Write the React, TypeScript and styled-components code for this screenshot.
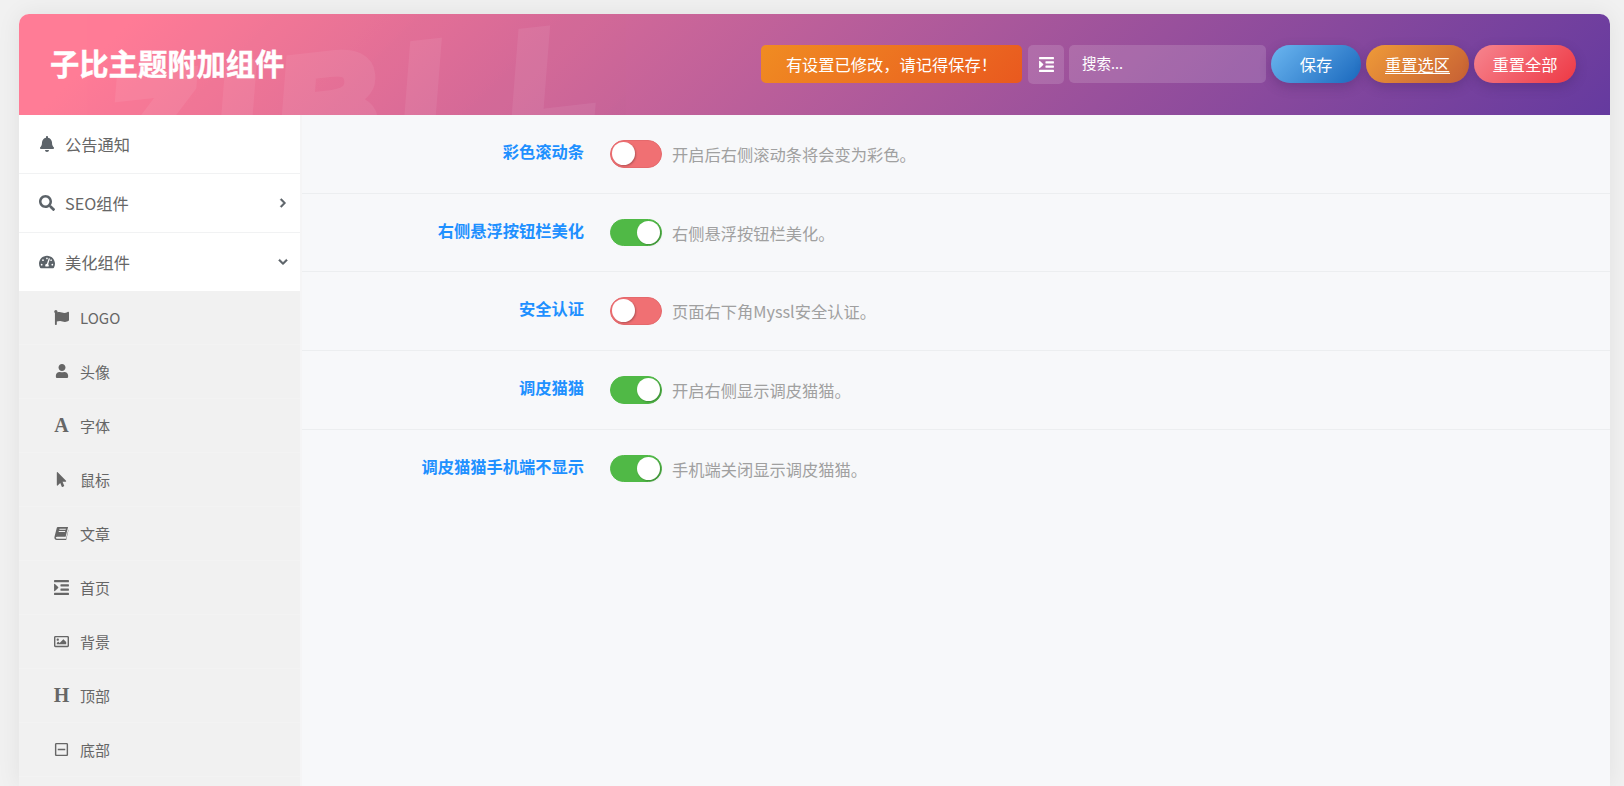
import React from 'react';
import styled, { createGlobalStyle } from 'styled-components';
import {
  FaBell, FaSearch, FaTachometerAlt, FaFlag, FaUser, FaMousePointer, FaIndent,
  FaRegImage, FaRegMinusSquare, FaChevronRight, FaChevronDown,
} from 'react-icons/fa';

const Global = createGlobalStyle`
  html, body { margin: 0; padding: 0; height: 786px; overflow: hidden; background: #f1f1f1; }
  body { font-family: "Noto Sans CJK SC", "Noto Sans", sans-serif; }
  * { box-sizing: border-box; }
`;

const Page = styled.div`
  height: 786px;
  padding: 14px 14px 0 19px;
  overflow: hidden;
`;

const Card = styled.div`
  height: 772px;
  display: flex;
  flex-direction: column;
  border-radius: 10px 10px 0 0;
  box-shadow: 0 0 25px rgba(0, 0, 0, 0.07);
  overflow: hidden;
  background: #f7f8fa;
`;

const Header = styled.header`
  position: relative;
  height: 101px;
  flex: none;
  display: flex;
  align-items: center;
  justify-content: space-between;
  padding: 0 34px 0 31px;
  background: linear-gradient(135deg, #ff7c96 7%, #653a9f 100%);
  overflow: hidden;
`;

const Watermark = styled.div`
  position: absolute;
  left: 96px;
  top: 45px;
  font-family: "Liberation Sans", sans-serif;
  font-size: 142px;
  line-height: 142px;
  font-weight: 700;
  font-style: italic;
  letter-spacing: 22px;
  color: #fff;
  opacity: 0.065;
  transform: rotate(-6.5deg);
  transform-origin: 0 100%;
  -webkit-text-stroke: 11px #fff;
`;

const Title = styled.h1`
  position: relative;
  margin: 0 0 5px;
  font-size: 29.3px;
  line-height: 40px;
  font-weight: 700;
  color: #fff;
  -webkit-text-stroke: 0.4px #fff;
`;

const Actions = styled.div`
  position: relative;
  display: flex;
  align-items: flex-start;
  gap: 5px;
`;

const Notice = styled.div`
  width: 261px;
  height: 38px;
  display: flex;
  align-items: center;
  justify-content: center;
  border-radius: 5px;
  margin-right: 1px;
  font-size: 16.25px;
  color: #fff;
  background: linear-gradient(135deg, #f08c22, #e9591f);
`;

const IconButton = styled.div`
  width: 36px;
  height: 39px;
  display: flex;
  align-items: center;
  justify-content: center;
  border-radius: 5px;
  color: #fff;
  font-size: 17px;
  background: rgba(255, 255, 255, 0.14);
`;

const Search = styled.div`
  width: 197px;
  height: 38px;
  display: flex;
  align-items: center;
  padding: 0 0 4px 13px;
  border-radius: 5px;
  font-size: 14.5px;
  color: #fff;
  background: rgba(255, 255, 255, 0.15);
`;

const Pill = styled.div<{ $from: string; $to: string; $w: number; $under?: boolean }>`
  width: ${(p) => p.$w}px;
  height: 38px;
  display: flex;
  align-items: center;
  justify-content: center;
  border-radius: 19px;
  font-size: 16.25px;
  color: #fff;
  text-decoration: ${(p) => (p.$under ? 'underline' : 'none')};
  text-underline-offset: 2px;
  background: linear-gradient(135deg, ${(p) => p.$from}, ${(p) => p.$to});
  box-shadow: 0 4px 12px rgba(60, 30, 90, 0.3);
`;

const Body = styled.div`
  flex: 1;
  display: flex;
  min-height: 0;
`;

const Sidebar = styled.nav`
  flex: none;
  width: 283px;
  background: #fff;
  border-right: 2px solid #f5f5f6;
`;

const MenuRow = styled.div`
  height: 59px;
  display: flex;
  align-items: center;
  padding: 0 12px 0 20px;
  border-bottom: 1px solid #f1f2f3;
  color: #666;
  font-size: 16.25px;
  background: #fff;
  &:nth-child(3) { height: 58px; border-bottom: none; }
`;

const MenuIcon = styled.span`
  width: 16px;
  margin-right: 10px;
  display: flex;
  justify-content: center;
  font-size: 16px;
  color: #5c6369;
`;

const Arrow = styled.span`
  margin-left: auto;
  display: flex;
  font-size: 10px;
  color: #5c6369;
  svg { stroke-width: 30; }
`;

const SubMenu = styled.div`
  background: #f1f1f1;
`;

const SubRow = styled.div`
  height: 54px;
  display: flex;
  align-items: center;
  padding: 0 0 1px 35px;
  border-bottom: 1px solid #f3f3f3;
  color: #666;
  font-size: 15px;
`;

const SubIcon = styled.span`
  width: 15px;
  margin-right: 11px;
  display: flex;
  justify-content: center;
  align-items: center;
  font-size: 17px;
  color: #666;
`;

const SerifGlyph = styled.span`
  font-family: "Liberation Serif", serif;
  font-weight: 700;
  font-size: 20px;
  line-height: 20px;
`;

const Main = styled.main`
  flex: 1;
  min-width: 0;
  background: #f7f8fa;
`;

const OptionRow = styled.div`
  height: 78.7px;
  display: grid;
  grid-template-columns: 282px 52px 1fr;
  padding-top: 25px;
  border-bottom: 1px solid #eceef0;
  &:last-child { border-bottom: none; }
`;

const Label = styled.div`
  text-align: right;
  font-size: 16.25px;
  line-height: 23px;
  font-weight: 700;
  color: #1e90ff;
`;

const Control = styled.div`
  margin-left: 26px;
  width: 52px;
  grid-column: 2;
`;

const Toggle = styled.div<{ $on: boolean }>`
  position: relative;
  width: 52px;
  height: 27.5px;
  border-radius: 14px;
  background: ${(p) => (p.$on ? '#50b946' : '#f07073')};
  border: 1.5px solid ${(p) => (p.$on ? '#50b946' : '#e5696c')};
`;

const Knob = styled.span<{ $on: boolean }>`
  position: absolute;
  top: 1px;
  left: ${(p) => (p.$on ? '26px' : '1px')};
  width: 23px;
  height: 23px;
  border-radius: 50%;
  background: #fff;
  box-shadow: 1px 1px 2px rgba(0, 0, 0, 0.25);
`;

const Desc = styled.div`
  margin-left: 36px;
  padding-top: 1px;
  font-size: 16.25px;
  line-height: 26px;
  color: #a0a0a0;
  white-space: nowrap;
`;

const BookIcon = () => (
  <svg width="16" height="15" viewBox="0 0 16 15" fill="currentColor">
    <path d="M4 0.5h11l-2.6 10.4H3.2c-1 0-1.4.9-1.2 1.3.2.5.7.8 1.2.8h9.6l2.6-10v1.2L13 14.5H3c-1.6 0-2.8-1.2-2.6-2.9L3 1.4C3.2.8 3.5.5 4 .5zm1.6 3h6.8l.3-1H5.9zm-.7 2.4h6.8l.3-1H5.2z" fillRule="evenodd" />
  </svg>
);

const options = [
  { label: '彩色滚动条', on: false, desc: '开启后右侧滚动条将会变为彩色。' },
  { label: '右侧悬浮按钮栏美化', on: true, desc: '右侧悬浮按钮栏美化。' },
  { label: '安全认证', on: false, desc: '页面右下角Myssl安全认证。' },
  { label: '调皮猫猫', on: true, desc: '开启右侧显示调皮猫猫。' },
  { label: '调皮猫猫手机端不显示', on: true, desc: '手机端关闭显示调皮猫猫。' },
];

const subs: { icon: React.ReactNode; text: string }[] = [
  { icon: <FaFlag />, text: 'LOGO' },
  { icon: <FaUser size={14} />, text: '头像' },
  { icon: <SerifGlyph>A</SerifGlyph>, text: '字体' },
  { icon: <FaMousePointer size={15} />, text: '鼠标' },
  { icon: <BookIcon />, text: '文章' },
  { icon: <FaIndent size={17} />, text: '首页' },
  { icon: <FaRegImage size={19} />, text: '背景' },
  { icon: <SerifGlyph>H</SerifGlyph>, text: '顶部' },
  { icon: <FaRegMinusSquare size={15} />, text: '底部' },
  { icon: null, text: '' },
];

export default function App() {
  return (
    <>
      <Global />
      <Page>
        <Card>
          <Header>
            <Watermark>ZIBLL</Watermark>
            <Title>子比主题附加组件</Title>
            <Actions>
              <Notice>{'有设置已修改\uFF0C请记得保存\uFF01'}</Notice>
              <IconButton><FaIndent /></IconButton>
              <Search>搜索...</Search>
              <Pill $w={90} $from="#6bb6f0" $to="#1a68bd">保存</Pill>
              <Pill $w={103} $from="#ef9b38" $to="#c65f34" $under>重置选区</Pill>
              <Pill $w={102} $from="#f6858f" $to="#ee3844">重置全部</Pill>
            </Actions>
          </Header>
          <Body>
            <Sidebar>
              <MenuRow>
                <MenuIcon><FaBell /></MenuIcon>公告通知
              </MenuRow>
              <MenuRow>
                <MenuIcon><FaSearch /></MenuIcon>SEO组件
                <Arrow><FaChevronRight /></Arrow>
              </MenuRow>
              <MenuRow>
                <MenuIcon><FaTachometerAlt /></MenuIcon>美化组件
                <Arrow><FaChevronDown /></Arrow>
              </MenuRow>
              <SubMenu>
                {subs.map((s, i) => (
                  <SubRow key={i}>
                    <SubIcon>{s.icon}</SubIcon>
                    {s.text}
                  </SubRow>
                ))}
              </SubMenu>
            </Sidebar>
            <Main>
              {options.map((o) => (
                <OptionRow key={o.label}>
                  <Label>{o.label}</Label>
                  <Control>
                    <Toggle $on={o.on}><Knob $on={o.on} /></Toggle>
                  </Control>
                  <Desc>{o.desc}</Desc>
                </OptionRow>
              ))}
            </Main>
          </Body>
        </Card>
      </Page>
    </>
  );
}
